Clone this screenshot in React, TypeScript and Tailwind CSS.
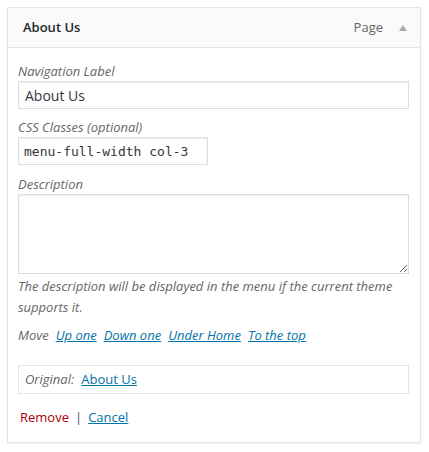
export default function App() {
  return (
    <div className="min-h-[452px] bg-white pl-[7px] pt-[7px] font-['Open_Sans',sans-serif] text-[13px] text-[#444]">
      <div className="w-[414px] border border-[#e5e5e5] bg-white shadow-[0_1px_1px_rgba(0,0,0,0.04)]">
        <div className="flex h-[40px] items-center border-b border-[#e5e5e5] bg-[#fafafa] pl-[15px] pr-[10px]">
          <span className="flex-1 text-[13px] font-semibold text-[#23282d]">About Us</span>
          <span className="text-[13px] text-[#666]">Page</span>
          <svg className="ml-[15px] mr-[2px]" width="10" height="8" viewBox="0 0 10 8">
            <polygon points="5,1 9,7 1,7" fill="#aaa" />
          </svg>
        </div>
        <div className="px-[10px] pb-[14px] pt-[13px]">
          <label className="block leading-[20px] italic text-[#666]">Navigation Label</label>
          <input
            className="block h-[28px] w-[391px] border border-[#ddd] px-[6px] text-[14px] text-[#32373c] shadow-[inset_0_1px_2px_rgba(0,0,0,0.07)] outline-none"
            defaultValue="About Us"
          />
          <label className="mt-[8px] block leading-[20px] italic text-[#666]">CSS Classes (optional)</label>
          <input
            className="block h-[28px] w-[190px] border border-[#ddd] px-[5px] font-['DejaVu_Sans_Mono',monospace] text-[13px] text-[#32373c] shadow-[inset_0_1px_2px_rgba(0,0,0,0.07)] outline-none"
            defaultValue="menu-full-width col-3"
          />
          <label className="mt-[9px] block leading-[20px] italic text-[#666]">Description</label>
          <textarea className="block h-[80px] w-[391px] border border-[#ddd] shadow-[inset_0_1px_2px_rgba(0,0,0,0.07)] outline-none" />
          <p className="mt-[2px] leading-[21px] italic text-[#666]">
            The description will be displayed in the menu if the current theme supports it.
          </p>
          <div className="mt-[7px] flex gap-[7px] leading-[21px] italic text-[#666]">
            <span>Move</span>
            <a href="#" className="text-[#0073aa] underline">Up one</a>
            <a href="#" className="text-[#0073aa] underline">Down one</a>
            <a href="#" className="text-[#0073aa] underline">Under Home</a>
            <a href="#" className="text-[#0073aa] underline">To the top</a>
          </div>
          <div className="mt-[19px] flex h-[29px] w-[391px] items-center border border-[#e5e5e5] pl-[6px]">
            <span className="italic text-[#666]">Original:</span>
            <a href="#" className="ml-[7px] text-[#0073aa] underline">About Us</a>
          </div>
          <div className="mt-[13px] flex items-center pl-[2px] leading-[21px]">
            <a href="#" className="text-[#a00]">Remove</a>
            <span className="mx-[6px] text-[#555]">|</span>
            <a href="#" className="text-[#0073aa] underline">Cancel</a>
          </div>
        </div>
      </div>
    </div>
  );
}
